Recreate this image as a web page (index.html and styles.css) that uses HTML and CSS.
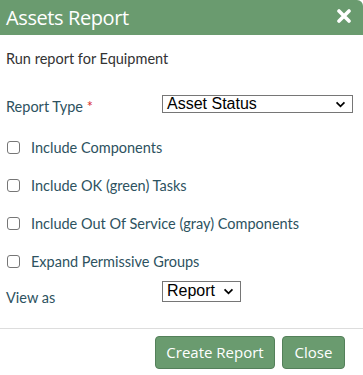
FILE: index.html
```html
<!DOCTYPE html>
<html>
<head>
<meta charset="utf-8">
<link rel="stylesheet" href="styles.css">
</head>
<body>
<div class="dialog">
  <div class="header">
    <span class="title">Assets Report</span>
    <svg class="close-x" width="14" height="14" viewBox="0 0 14 14"><path d="M2 2 L12 12 M12 2 L2 12" stroke="#fff" stroke-width="3.6" stroke-linecap="round"/></svg>
  </div>
  <div class="body">
    <div class="intro">Run report for Equipment</div>
    <div class="row type-row">
      <label class="label">Report Type <span class="req">*</span></label>
      <div class="select wide"><span>Asset Status</span><svg width="11" height="7" viewBox="0 0 12 8"><path d="M1.5 1.5 L6 6 L10.5 1.5" fill="none" stroke="#000" stroke-width="2"/></svg></div>
    </div>
    <div class="checks">
      <label class="check"><span class="box"></span>Include Components</label>
      <label class="check"><span class="box"></span>Include OK (green) Tasks</label>
      <label class="check"><span class="box"></span>Include Out Of Service (gray) Components</label>
      <label class="check"><span class="box"></span>Expand Permissive Groups</label>
    </div>
    <div class="row view-row">
      <label class="label">View as</label>
      <div class="select narrow"><span>Report</span><svg width="11" height="7" viewBox="0 0 12 8"><path d="M1.5 1.5 L6 6 L10.5 1.5" fill="none" stroke="#000" stroke-width="2"/></svg></div>
    </div>
  </div>
  <div class="footer">
    <button class="btn create">Create Report</button>
    <button class="btn close">Close</button>
  </div>
</div>
</body>
</html>
```
FILE: styles.css
```css
html, body { margin: 0; padding: 0; background: #fff; }
body { width: 363px; height: 375px; overflow: hidden; }
.dialog { width: 363px; font-family: "Lato", "Open Sans", sans-serif; }
.header {
  height: 35px;
  background: #6a9b6f;
  display: flex;
  align-items: center;
  justify-content: space-between;
  padding: 0 12px 0 6px;
  box-sizing: border-box;
  border-top-right-radius: 6px;
}
.title { font-family: "Open Sans", sans-serif; color: #fff; font-size: 20px; letter-spacing: -0.4px; }
.close-x { margin-top: -3px; }
.body { padding: 14px 10px 0 6px; }
.intro { font-size: 14.5px; color: #333; line-height: 20px; }
.row { display: flex; align-items: flex-start; }
.label { width: 156px; font-size: 14.5px; color: #2d5260; line-height: 20px; }
.req { color: #d9302f; }
.type-row { margin-top: 24px; height: 24px; }
.type-row .label { padding-top: 4px; }
.type-row .select { margin-top: 2px; }
.select {
  box-sizing: border-box;
  border: 1px solid #767676;
  display: flex;
  align-items: center;
  justify-content: space-between;
  font-family: "Liberation Sans", Arial, sans-serif;
  font-size: 16px;
  color: #000;
  padding: 0 6px 0 4px;
  height: 18px;
}
.wide { width: 191px; }
.narrow { width: 79px; height: 21px; }
.checks { display: flex; flex-direction: column; gap: 18.3px; margin-top: 20px; }
.check { display: flex; align-items: center; font-size: 14.5px; color: #2d5260; height: 20px; }
.box {
  width: 11px; height: 11px;
  border: 1px solid #767676;
  border-radius: 3px;
  margin: 0 11px 0 1px;
  flex: none;
}
.view-row { margin-top: 7px; height: 29px; }
.view-row .label { padding-top: 9px; }
.view-row .select { margin-top: 2px; }
.footer {
  margin-top: 20px;
  border-top: 1px solid #ddd;
  display: flex;
  justify-content: flex-end;
  gap: 7px;
  padding: 7px 18px 0 0;
}
.btn {
  font-family: "Open Sans", sans-serif;
  font-size: 15px;
  color: #fff;
  background: #6a9b6f;
  border: 1px solid #54805a;
  border-radius: 4px;
  height: 33px;
  padding: 0;
}
.create { width: 120px; }
.close { width: 63px; }
```
